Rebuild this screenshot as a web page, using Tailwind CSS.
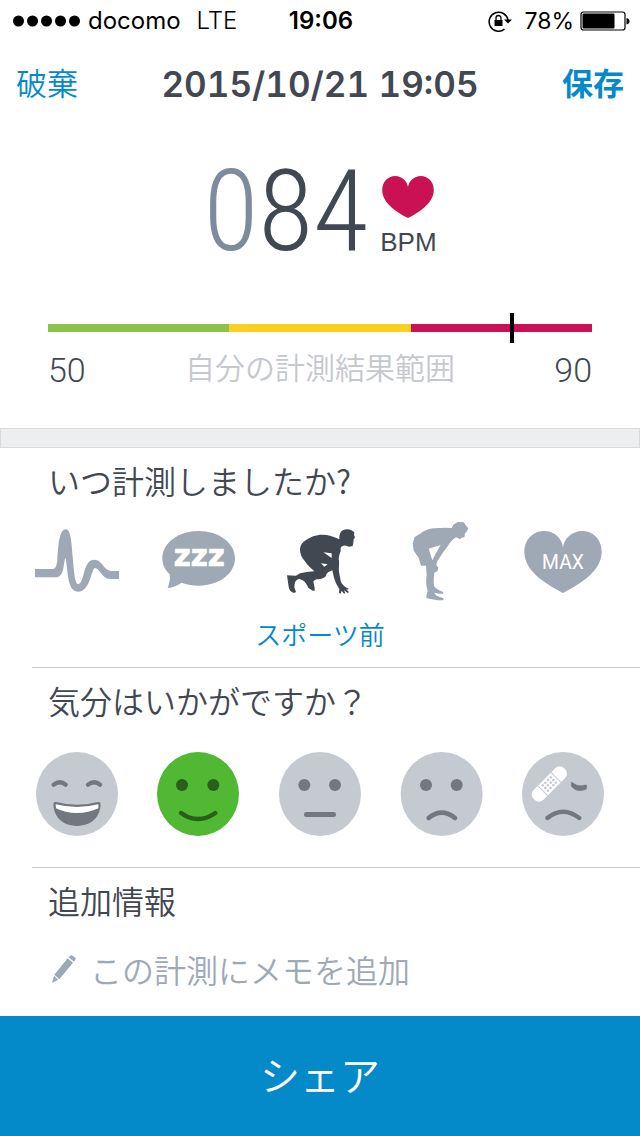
<!DOCTYPE html>
<html lang="ja">
<head>
<meta charset="utf-8">
<meta name="viewport" content="width=device-width, initial-scale=1">
<title>計測結果</title>
<script src="https://cdn.jsdelivr.net/npm/@tailwindcss/browser@4"></script>
</head>
<body class="min-h-screen flex flex-col bg-white text-[#424851] font-['Inter','Noto_Sans_CJK_JP',sans-serif]">

<!-- Status bar -->
<div class="grid grid-cols-[1fr_auto_1fr] items-center h-[42px] pl-3 pr-2.5 text-2xl text-black">
  <div class="flex items-center whitespace-nowrap">
    <svg class="w-[68px] h-3 mr-2 shrink-0" viewBox="0 0 68 12" aria-hidden="true">
      <circle cx="6.500" cy="6" r="5.500"/><circle cx="20.500" cy="6" r="5.500"/><circle cx="34.500" cy="6" r="5.500"/><circle cx="48.500" cy="6" r="5.500"/><circle cx="62.500" cy="6" r="5.500"/>
    </svg>
    <span>docomo</span><span class="ml-4 font-light">LTE</span>
  </div>
  <div class="text-center font-semibold">19:06</div>
  <div class="flex items-center justify-end">
    <svg class="w-6 h-6 mr-3" viewBox="0 0 24 24" aria-hidden="true">
      <path d="M16.500 20.200A9.500 9.500 0 1 1 20 11" fill="none" stroke="#000" stroke-width="1.500"/>
      <path d="M16 10.500h8l-4 4z"/>
      <path d="M6.500 11h8v6h-8z"/>
      <path d="M8 11.500V9a2.500 2.500 0 0 1 5 0v2.500" fill="none" stroke="#000" stroke-width="1.300"/>
    </svg>
    <span class="text-[23px]">78%</span>
    <svg class="w-[50px] h-5 ml-1.5" viewBox="0 0 50 20" aria-hidden="true">
      <rect x="1" y="1" width="44" height="18" rx="2.500" fill="none" stroke="#000" stroke-width="1.200"/>
      <rect x="2.500" y="2.500" width="32" height="15" rx="1"/>
      <path d="M46.500 7q3 .5 3 3.200t-3 3.200z"/>
    </svg>
  </div>
</div>

<!-- Navigation -->
<header class="flex items-center justify-between h-[84px] px-4">
  <button type="button" class="text-[31px] leading-10 font-[350] text-[#0489c9]">破棄</button>
  <h1 class="text-[35px] leading-10 font-semibold tabular-nums">2015/10/21 19:05</h1>
  <button type="button" class="text-[31px] leading-10 font-bold text-[#0489c9]">保存</button>
</header>

<main class="flex-1">
  <!-- Result -->
  <section class="h-[302px]">
    <div class="flex justify-center items-end gap-3 h-[136px]">
      <div class="text-[113px] leading-[100px] font-light font-['Liberation_Sans_Narrow','Roboto_Condensed','Roboto',sans-serif]"><span class="text-[#7d8b9f]">0</span>84</div>
      <div class="flex flex-col items-center pb-1">
        <svg class="w-[52px] h-[42px] mb-2" viewBox="576 80 156 127" aria-hidden="true">
          <path fill="#c91154" d="M654 207C614 186 576 159 576 122C576 97 595 80 615 80C636 80 652 96 654 114C656 96 672 80 693 80C713 80 732 97 732 122C732 159 694 186 654 207Z"/>
        </svg>
        <span class="text-[26px] leading-8 font-['Liberation_Sans',sans-serif]">BPM</span>
      </div>
    </div>
    <div class="relative mx-12 mt-[62px] grid grid-cols-3 h-2">
      <div class="bg-[#8bc34a]"></div><div class="bg-[#fbcf1d]"></div><div class="bg-[#c91154]"></div>
      <div class="absolute -top-[11px] h-[30px] w-1 -ml-0.5 bg-black" style="left:85.3%"></div>
    </div>
    <div class="flex items-center justify-between mx-12 mt-4 h-11 text-[34px] font-light font-['Roboto',sans-serif]">
      <span>50</span>
      <span class="pb-2 text-[30px] font-[350] text-[#c5c8ce] font-['Noto_Sans_CJK_JP',sans-serif]">自分の計測結果範囲</span>
      <span>90</span>
    </div>
  </section>

  <div class="h-5 bg-[#edeef0] border border-[#d8dadd]"></div>

  <!-- When was it measured -->
  <fieldset class="h-[219px]">
    <legend class="float-left w-full pt-2 pb-1 pl-12 text-[32px] leading-[48px] font-[350] font-['Noto_Sans_CJK_JP',sans-serif]">いつ計測しましたか?</legend>
    <div class="clear-both grid grid-cols-5 justify-items-center px-4 pt-3 text-[#9fa9b6]">
      <label><input type="radio" name="when" class="sr-only" aria-label="安静時">
        <svg class="w-[84px] h-[84px]" viewBox="45 30 252 252" fill="currentColor" aria-hidden="true"><path d="M45 177H98C108 176 110 165 112 150C115 105 118 58 137 58C152 58 154 90 158 140C162 180 164 222 175 222C186 222 189 195 196 175C202 158 210 149 223 149C248 149 250 183 277 183H297V207H270C245 207 240 174 224 174C214 178 211 245 174 245C148 245 144 205 140 165L137 145C135 140 133 160 131 170C127 195 118 202 105 202H45Z"/></svg>
      </label>
      <label><input type="radio" name="when" class="sr-only" aria-label="起床時">
        <svg class="w-[84px] h-[84px]" viewBox="408 30 252 252" aria-hidden="true"><path fill="currentColor" d="M536 63C597 63 645 99 645 145C645 191 597 227 536 227C517 227 500 224 485 218C472 226 460 233 443 234C447 222 452 207 449 193C435 180 427 164 427 145C427 99 475 63 536 63Z"/><text x="538" y="168" text-anchor="middle" font-family="DejaVu Sans, sans-serif" font-weight="700" font-size="88" fill="#fff" stroke="#fff" stroke-width="2" stroke-linejoin="round">zzz</text></svg>
      </label>
      <label class="text-[#424851]"><input type="radio" name="when" class="sr-only" aria-label="スポーツ前" checked>
        <svg class="w-[84px] h-[84px]" viewBox="24 30 252 252" fill="currentColor" aria-hidden="true"><path fill-rule="evenodd" d="M208 88C207 68 215 59 230 58C242 58 248 63 253 67L252 75L255 82L251 88L250 98L248 108L238 110L228 107C220 106 213 109 212 114L212 124C208 132 207 140 206 146C209 158 206 168 207 185L212 212C215 222 220 226 226 231L236 236L233 239L228 238L237 246L233 249L222 241L226 250L222 251L215 242L212 251L207 248L208 237C200 225 195 213 192 203L187 181C178 185 169 188 168 198C160 208 150 206 136 209L130 214L134 234L134 242L128 242L115 233C111 225 105 214 98 211L88 207C80 208 75 213 74 222L73 232L78 246L72 249C62 246 57 239 56 230L51 196L78 197L90 190L115 185L133 184C122 173 112 165 106 155C94 141 90 131 90 116C92 104 98 96 107 91C120 81 138 74 156 74C176 74 190 79 208 88ZM160 127L185 144L185 130ZM153 160L163 170L173 163Z"/></svg>
      </label>
      <label><input type="radio" name="when" class="sr-only" aria-label="スポーツ後">
        <svg class="w-[84px] h-[84px]" viewBox="0 30 252 252" fill="currentColor" aria-hidden="true"><path fill-rule="evenodd" d="M155 54L160 44L173 36L192 37L197 46L205 55L200 65L195 70L193 82L184 83L181 88L168 82C157 88 151 97 145 106L128 129L111 155L109 166L115 173L112 184L103 188L101 213L102 228C110 238 119 243 130 246L129 251L116 251L103 248L109 257L131 265L130 271L113 271L80 265L79 257L83 242C77 225 78 211 80 195L78 167L63 167L56 143L41 122L38 100L44 81L60 71C73 62 85 56 102 55L137 53ZM86 116L97 151L107 131L122 105Z"/></svg>
      </label>
      <label><input type="radio" name="when" class="sr-only" aria-label="最大心拍">
        <svg class="w-[84px] h-[84px]" viewBox="363 30 252 252" aria-hidden="true"><path fill="currentColor" d="M489 249C430 218 373 180 373 125C373 88 400 63 432 63C465 63 488 88 489 114C490 88 515 63 547 63C579 63 605 88 605 125C605 180 548 218 489 249Z"/><text x="489" y="176" text-anchor="middle" font-family="Roboto, sans-serif" font-size="58" fill="#fff">MAX</text></svg>
      </label>
    </div>
    <p class="pt-2 text-center text-[26px] leading-[44px] font-[350] text-[#0489c9] font-['Noto_Sans_CJK_JP',sans-serif]">スポーツ前</p>
  </fieldset>

  <!-- Mood -->
  <fieldset class="ml-8 border-t border-[#c8cacd] h-[200px]">
    <legend class="float-left w-full pt-2 pb-1 pl-4 text-[32px] leading-[48px] font-[350] font-['Noto_Sans_CJK_JP',sans-serif]">気分はいかがですか？</legend>
    <div class="clear-both -ml-8 grid grid-cols-5 justify-items-center px-4 pt-6">
      <label><input type="radio" name="mood" class="sr-only" aria-label="とても良い">
        <svg class="w-[84px] h-[84px]" viewBox="45 36 252 252" aria-hidden="true"><ellipse cx="171" cy="162" rx="123" ry="126" fill="#c5c9d0"/><path d="M101 134Q120 119 137 134M204 134Q223 119 240 134" fill="none" stroke="#737780" stroke-width="13" stroke-linecap="round"/><path fill="#737780" d="M108 186Q171 202 234 186Q242 185 242 193C240 235 210 258 171 258C132 258 102 235 100 193Q100 185 108 186Z"/><path fill="#fff" d="M107 193Q171 209 235 193L235 205Q206 219 171 219Q136 219 108 205Z"/></svg>
      </label>
      <label><input type="radio" name="mood" class="sr-only" aria-label="良い" checked>
        <svg class="w-[84px] h-[84px]" viewBox="408 36 252 252" aria-hidden="true"><ellipse cx="534" cy="162" rx="123" ry="126" fill="#50b833"/><circle cx="486" cy="135" r="18" fill="#2a5f1b"/><circle cx="580" cy="135" r="18" fill="#2a5f1b"/><path d="M483 219Q534 255 586 219" fill="none" stroke="#2a5f1b" stroke-width="13" stroke-linecap="round"/></svg>
      </label>
      <label><input type="radio" name="mood" class="sr-only" aria-label="普通">
        <svg class="w-[84px] h-[84px]" viewBox="39 36 252 252" aria-hidden="true"><ellipse cx="165" cy="162" rx="123" ry="126" fill="#c5c9d0"/><g fill="#737780"><circle cx="118" cy="135" r="18"/><circle cx="210" cy="135" r="18"/><rect x="117" y="216" width="96" height="15" rx="7"/></g></svg>
      </label>
      <label><input type="radio" name="mood" class="sr-only" aria-label="悪い">
        <svg class="w-[84px] h-[84px]" viewBox="403 36 252 252" aria-hidden="true"><ellipse cx="528" cy="162" rx="123" ry="126" fill="#c5c9d0"/><circle cx="481" cy="135" r="18" fill="#737780"/><circle cx="573" cy="135" r="18" fill="#737780"/><path d="M489 234Q528 202 568 234" fill="none" stroke="#737780" stroke-width="14" stroke-linecap="round"/></svg>
      </label>
      <label><input type="radio" name="mood" class="sr-only" aria-label="体調不良">
        <svg class="w-[84px] h-[84px]" viewBox="33 36 252 252" aria-hidden="true"><ellipse cx="159" cy="162" rx="123" ry="126" fill="#c5c9d0"/><path d="M112 234Q159 196 208 234" fill="none" stroke="#737780" stroke-width="13" stroke-linecap="round"/><path d="M184 126L190 130Q206 142 224 135L230 136L229 147Q200 160 184 138Z" fill="#737780" stroke="#737780" stroke-width="2" stroke-linejoin="round"/>
          <g transform="translate(118 132) rotate(-45)"><rect x="-65" y="-21" width="130" height="42" rx="19" fill="#fff"/><path d="M-28 -21V21M28 -21V21" stroke="#c5c9d0" stroke-width="3"/><g fill="#c5c9d0"><circle cx="-17" cy="-11" r="4"/><circle cx="-6" cy="-11" r="4"/><circle cx="6" cy="-11" r="4"/><circle cx="17" cy="-11" r="4"/><circle cx="-17" cy="0" r="4"/><circle cx="-6" cy="0" r="4"/><circle cx="6" cy="0" r="4"/><circle cx="17" cy="0" r="4"/><circle cx="-17" cy="11" r="4"/><circle cx="-6" cy="11" r="4"/><circle cx="6" cy="11" r="4"/><circle cx="17" cy="11" r="4"/></g></g></svg>
      </label>
    </div>
  </fieldset>

  <!-- Notes -->
  <section class="ml-8 border-t border-[#c8cacd] pt-2 pl-4 font-[350] font-['Noto_Sans_CJK_JP',sans-serif]">
    <h2 class="pb-1 text-[32px] leading-[48px] font-[350]">追加情報</h2>
    <label class="flex items-center pt-4 pb-5">
      <svg class="w-6 h-7 ml-1 mr-3.5 shrink-0" viewBox="68 257 72 84" fill="#9fa9b6" aria-hidden="true"><path d="M68 341L74 319L87 331ZM75 316L115 267L131 280L90 330ZM118 264L123 259Q127 256 130 259L138 265Q140 268 138 271L134 277Z"/></svg>
      <input type="text" aria-label="メモ" placeholder="この計測にメモを追加" class="flex-1 min-w-0 h-[50px] text-[32px] font-[350] outline-none placeholder:text-[#9fa9b6]">
    </label>
  </section>
</main>

<button type="button" class="h-[120px] w-full pb-1 bg-[#0489c9] text-white text-[40px] font-[350] font-['Noto_Sans_CJK_JP',sans-serif]">シェア</button>
</body>
</html>
